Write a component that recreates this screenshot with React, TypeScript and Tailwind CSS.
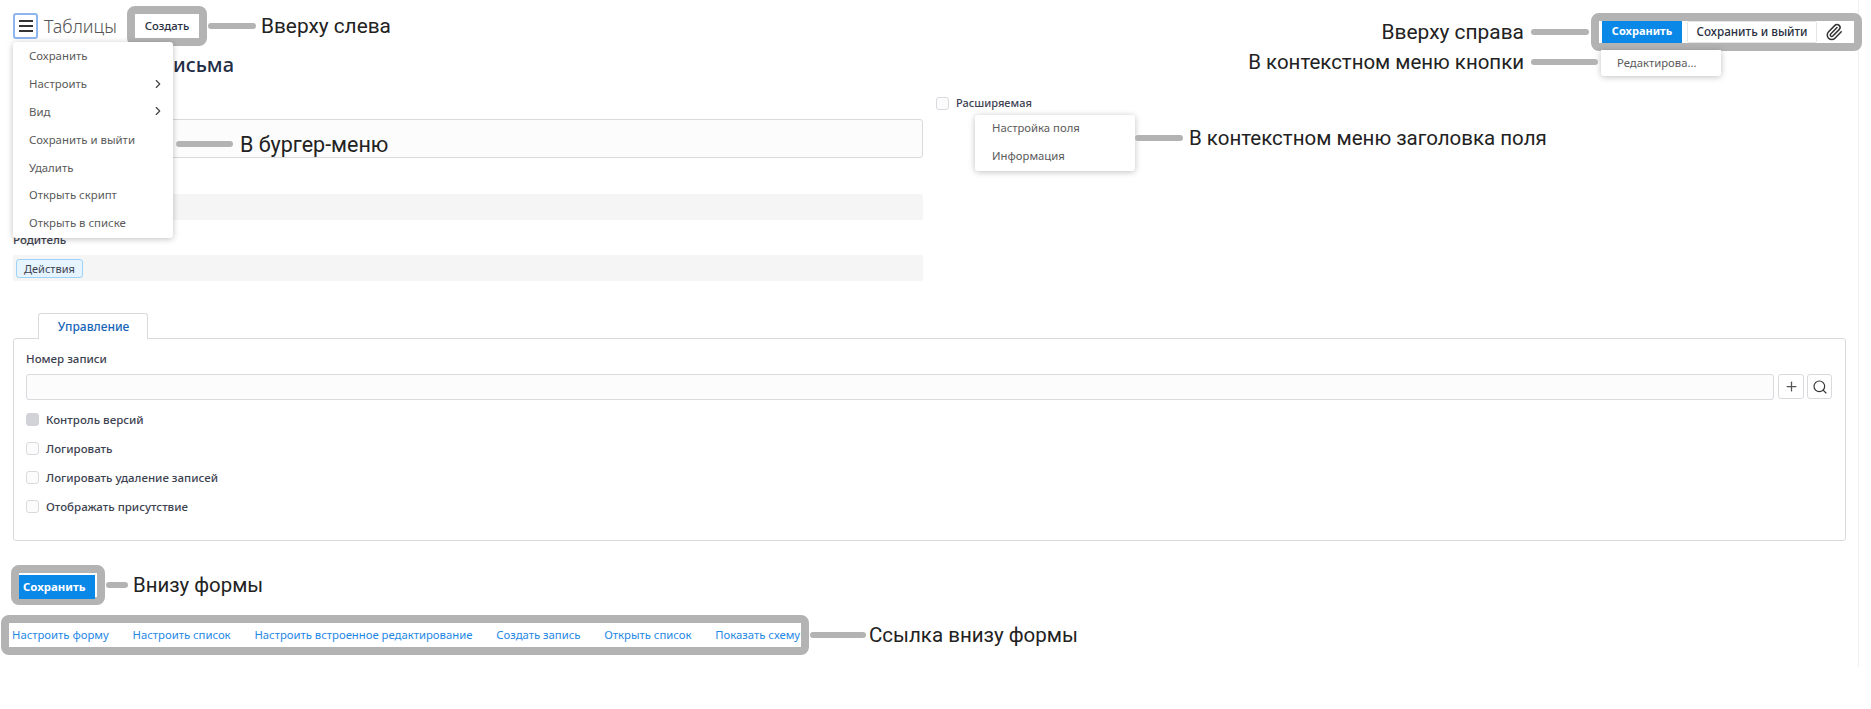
import { ChevronRight, Paperclip, Plus, Search } from "lucide-react";

const burgerItems = [
  { label: "Сохранить" },
  { label: "Настроить", sub: true },
  { label: "Вид", sub: true },
  { label: "Сохранить и выйти" },
  { label: "Удалить" },
  { label: "Открыть скрипт" },
  { label: "Открыть в списке" },
];

const checks = [
  { label: "Контроль версий", disabled: true },
  { label: "Логировать" },
  { label: "Логировать удаление записей" },
  { label: "Отображать присутствие" },
];

const links = [
  "Настроить форму",
  "Настроить список",
  "Настроить встроенное редактирование",
  "Создать запись",
  "Открыть список",
  "Показать схему",
];

const Callout = ({ children, className }: { children: React.ReactNode; className: string }) => (
  <span className={`font-['Roboto',sans-serif] leading-6 text-[#222] whitespace-nowrap ${className}`}>
    {children}
  </span>
);

const Line = ({ className }: { className: string }) => (
  <div className={`h-[6px] rounded-full bg-[#b3b3b3] ${className}`}></div>
);

const Frame = ({ children, className = "" }: { children: React.ReactNode; className?: string }) => (
  <div className={`border-8 border-[#b3b3b3] rounded-[8px] bg-white ${className}`}>{children}</div>
);

const Box = ({ disabled }: { disabled?: boolean }) => (
  <span
    className={`w-[13px] h-[13px] rounded-[3px] border shrink-0 ${
      disabled ? "bg-[#d1d3d8] border-[#d1d3d8]" : "bg-[#fcfcfc] border-[#d8dade]"
    }`}
  ></span>
);

const App = () => {
  return (
    <div className="relative w-[1871px] h-[709px] bg-white overflow-hidden font-['Noto_Sans','Open_Sans',sans-serif]">
      <div className="w-[1859px] h-[667px] border-r border-[#f0f0f2]">
        <header className="flex justify-between w-[1871px] h-[50px] pl-[13px] pr-[9px]">
          <div className="flex items-center h-[52px]">
            <button className="flex items-center justify-center w-[25px] h-[26px] rounded-[3px] border-2 border-[#8db6ee] text-[#333]">
              <svg width="14" height="12" viewBox="0 0 14 12" fill="currentColor">
                <rect width="14" height="2" />
                <rect y="5" width="14" height="2" />
                <rect y="10" width="14" height="2" />
              </svg>
            </button>
            <span className="ml-[6px] text-[17.9px] font-light text-[#555] w-[83px]">Таблицы</span>
            <Frame className="w-[80px] h-[40px] flex items-center justify-center">
              <span className="text-[11.3px] font-medium text-[#2a3040]">Создать</span>
            </Frame>
            <Line className="w-[48px] ml-px" />
            <span className="ml-[5px]">
              <Callout className="text-[20.8px]">Вверху слева</Callout>
            </span>
          </div>
          <div className="flex items-center h-[50px] pt-[13px]">
            <Callout className="text-[20.9px]">Вверху справа</Callout>
            <Line className="w-[58px] ml-[7px] mr-[2px]" />
            <Frame className="flex items-stretch h-[38px] pl-[3px] w-[271px]">
              <button className="w-[80px] bg-[#0a88e8] text-white text-[11px] font-bold">Сохранить</button>
              <button className="ml-[5px] w-[130px] border border-[#e4e5e8] rounded-[2px] text-[11.7px] font-medium text-[#2a3040]">
                Сохранить и выйти
              </button>
              <div className="flex items-center justify-center w-[33px]">
                <Paperclip size={18} className="text-[#333]" />
              </div>
            </Frame>
          </div>
        </header>

        <div className="flex gap-[13px] pl-[13px]">
          <section className="w-[910px]">
            <h1 className="h-[30px] text-[20px] leading-[30px] font-medium text-[#1f2d45] text-right pr-[689px] whitespace-nowrap">
              Шаблон письма
            </h1>
            <div className="mt-[14px] h-5"></div>
            <div className="h-[39px] mt-[5px] rounded-[3px] border border-[#d8dade] bg-[#fcfcfc]"></div>
            <div className="h-5 mt-[11px] mb-[5px] text-[11.5px] leading-5 font-medium text-[#3d4250]">Имя</div>
            <div className="h-[26px] rounded-[3px] bg-[#f5f5f5]"></div>
            <div className="h-5 mt-[10px] mb-[5px] text-[11.5px] leading-5 font-medium text-[#3d4250]">Родитель</div>
            <div className="flex items-center h-[26px] px-[3px] rounded-[3px] bg-[#f5f5f5]">
              <span className="h-[19px] px-[7px] rounded-[3px] border border-[#9fd2f7] bg-[#e5f4ff] text-[11px] leading-[17px] text-[#3d4250]">
                Действия
              </span>
            </div>
          </section>
          <section className="pt-[44px]">
            <label className="flex items-center gap-[7px] h-[18px]">
              <Box />
              <span className="text-[11px] font-medium text-[#3d4250]">Расширяемая</span>
            </label>
          </section>
        </div>

        <div className="mt-[32px] pl-[13px] w-[1846px]">
          <div className="ml-[25px] flex items-center justify-center w-[110px] h-[26px] -mb-px pl-px relative bg-white rounded-t-[3px] border border-b-0 border-[#d8dade] text-[12px] font-medium text-[#1565b8]">
            Управление
          </div>
          <div className="h-[203px] rounded-[3px] border border-[#d8dade] pt-[10px] pl-[12px] pr-[13px]">
            <div className="h-5 text-[11.5px] leading-5 font-medium text-[#3d4250]">Номер записи</div>
            <div className="flex gap-[4px] mt-[5px]">
              <div className="flex-1 h-[26px] rounded-[3px] border border-[#d8dade] bg-[#fcfcfc]"></div>
              <button className="flex items-center justify-center w-[26px] h-[25px] rounded-[3px] border border-[#d8dade] text-[#555]">
                <Plus size={15} />
              </button>
              <button className="flex items-center justify-center w-[25px] h-[25px] -ml-px rounded-[3px] border border-[#d8dade] text-[#333]">
                <Search size={16} strokeWidth={1.75} />
              </button>
            </div>
            <div className="mt-[5px]">
              {checks.map((c) => (
                <label key={c.label} className="flex items-center gap-[7px] h-[29px]">
                  <Box disabled={c.disabled} />
                  <span className="text-[11.5px] font-medium text-[#3d4250]">{c.label}</span>
                </label>
              ))}
            </div>
          </div>
        </div>

        <div className="flex items-center mt-[24px] ml-[11px]">
          <Frame className="w-[94px] h-[40px] pr-[2px]">
            <button className="w-full h-full pl-[4px] text-left bg-[#0a88e8] text-white text-[11.4px] font-bold">
              Сохранить
            </button>
          </Frame>
          <Line className="w-[22px] ml-px" />
          <span className="ml-[5px]">
            <Callout className="text-[20.4px]">Внизу формы</Callout>
          </span>
        </div>

        <div className="flex items-center mt-[10px] ml-px">
          <Frame className="flex items-center gap-[23.8px] h-[40px] w-[808px] pl-[3px] overflow-hidden">
            {links.map((l) => (
              <a key={l} className="text-[11.3px] text-[#1e88e5] whitespace-nowrap">
                {l}
              </a>
            ))}
          </Frame>
          <Line className="w-[56px] ml-px" />
          <span className="ml-[3px]">
            <Callout className="text-[20.5px]">Ссылка внизу формы</Callout>
          </span>
        </div>
      </div>

      {/* burger menu */}
      <div className="absolute left-[13px] top-[42px] w-[160px] h-[196px] bg-white rounded-[3px] shadow-[0_1px_6px_rgba(0,0,0,0.25)]">
        {burgerItems.map((item) => (
          <div key={item.label} className="flex items-center justify-between h-[27.8px] pl-[16px] pr-[8px] text-[11.4px] text-[#5a5a5a]">
            <span>{item.label}</span>
            {item.sub && <ChevronRight size={14} className="text-[#444]" />}
          </div>
        ))}
      </div>

      {/* burger callout */}
      <div className="absolute left-[176px] top-[132px] flex items-center gap-[7px]">
        <Line className="w-[57px]" />
        <Callout className="text-[21.5px] translate-y-[1px]">В бургер-меню</Callout>
      </div>

      {/* button context menu */}
      <div className="absolute left-[1601px] top-[50px] flex items-center w-[120px] h-[26px] pl-[16px] bg-white rounded-b-[3px] shadow-[0_1px_6px_rgba(0,0,0,0.25)] text-[11.3px] text-[#5a5a5a]">
        Редактирова...
      </div>
      <div className="absolute right-[273px] top-[50px] flex items-center gap-[7px]">
        <Callout className="text-[20.45px]">В контекстном меню кнопки</Callout>
        <Line className="w-[67px]" />
      </div>

      {/* field header context menu */}
      <div className="absolute left-[975px] top-[115px] w-[160px] h-[56px] bg-white rounded-[3px] shadow-[0_1px_6px_rgba(0,0,0,0.25)] text-[11.3px] text-[#5a5a5a]">
        <div className="flex items-center h-[28px] pl-[17px] pb-px">Настройка поля</div>
        <div className="flex items-center h-[28px] pl-[17px] pb-px">Информация</div>
      </div>
      <div className="absolute left-[1135px] top-[126px] flex items-center gap-[6px]">
        <Line className="w-[48px]" />
        <Callout className="text-[20.5px]">В контекстном меню заголовка поля</Callout>
      </div>
    </div>
  );
};

export default App;
